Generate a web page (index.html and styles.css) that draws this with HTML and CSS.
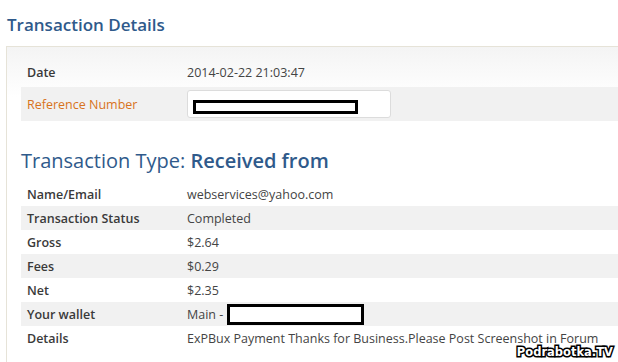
FILE: index.html
```html
<!doctype html>
<html lang="en">
  <head>
    <meta charset="UTF-8" />
    <meta name="viewport" content="width=device-width, initial-scale=1.0" />
    <title>Transaction Details</title>
    <link rel="stylesheet" href="styles.css">
  </head>

  <body>
    <h2 class="page-title">Transaction Details</h2>
    <div class="panel">
      <div class="rows rows-top">
        <div class="row">
          <span class="label">Date</span>
          <span class="value">2014-02-22 21:03:47</span>
        </div>
        <div class="row row-ref alt">
          <span class="label ref">Reference Number</span>
          <span class="ref-box"><span class="redact"></span></span>
        </div>
      </div>

      <h3 class="section-title">Transaction Type: <span class="strong">Received from</span></h3>

      <div class="rows">
        <div class="row"><span class="label">Name/Email</span><span class="value">webservices@yahoo.com</span></div>
        <div class="row alt"><span class="label">Transaction Status</span><span class="value">Completed</span></div>
        <div class="row"><span class="label">Gross</span><span class="value">$2.64</span></div>
        <div class="row alt"><span class="label">Fees</span><span class="value">$0.29</span></div>
        <div class="row"><span class="label">Net</span><span class="value">$2.35</span></div>
        <div class="row alt">
          <span class="label">Your wallet</span>
          <span class="value">Main - <span class="redact wallet"></span></span>
        </div>
        <div class="row"><span class="label">Details</span><span class="value">ExPBux Payment Thanks for Business.Please Post Screenshot in Forum</span></div>
      </div>
    </div>
    <div class="watermark">Podrabotka.TV</div>
  </body>
</html>
```
FILE: styles.css
```css
:root {
  --blue-title: #2f5a8b;
  --orange-ref: #d8731c;
  --band: #f1f1f1;
}

* {
  box-sizing: border-box;
}

body {
  margin: 0;
  padding: 0 0 0 6px;
  height: 100vh;
  overflow: hidden;
  position: relative;
  background: #fff;
  font-family: "Open Sans", sans-serif;
  font-size: 12.5px;
  color: #444;
}

.page-title {
  margin: 0;
  padding: 13px 0 0 1px;
  height: 46px;
  font-size: 17px;
  font-weight: 600;
  color: var(--blue-title);
}

.panel {
  margin-right: -20px;
  padding: 10px 0 30px 14px;
  border: 1px solid #e6e3d8;
  border-right: none;
  background: linear-gradient(#f4f4f4, #fff 50px);
}

.row {
  display: grid;
  grid-template-columns: 160px 1fr;
  align-items: center;
  height: 24px;
  padding: 0 6px;
}

.rows-top .row {
  height: 30px;
}

.row.alt {
  background: var(--band);
}

.rows-top .row-ref {
  height: 34px;
}

.label {
  color: #3a3a3a;
  font-weight: 600;
}

.label.ref {
  color: var(--orange-ref);
  font-weight: 400;
}

.value {
  display: flex;
  align-items: center;
  gap: 4px;
}

.ref-box {
  width: 204px;
  height: 28px;
  padding: 9px 0 0 5px;
  background: #fff;
  border: 1px solid #dcdcdc;
  border-radius: 3px;
}

.redact {
  display: block;
  width: 165px;
  height: 14px;
  border: 3px solid #000;
  background: #fff;
}

.redact.wallet {
  width: 137px;
  height: 21px;
}

.section-title {
  margin: 0;
  padding: 26px 0 0;
  height: 61px;
  font-size: 20px;
  font-weight: 400;
  color: var(--blue-title);
}

.section-title .strong {
  font-weight: 600;
}

.watermark {
  position: absolute;
  right: 5px;
  bottom: 3px;
  font-family: "DejaVu Sans", sans-serif;
  font-size: 11.5px;
  font-weight: 700;
  color: #fff;
  -webkit-text-stroke: 3px #000;
  paint-order: stroke fill;
}
```
